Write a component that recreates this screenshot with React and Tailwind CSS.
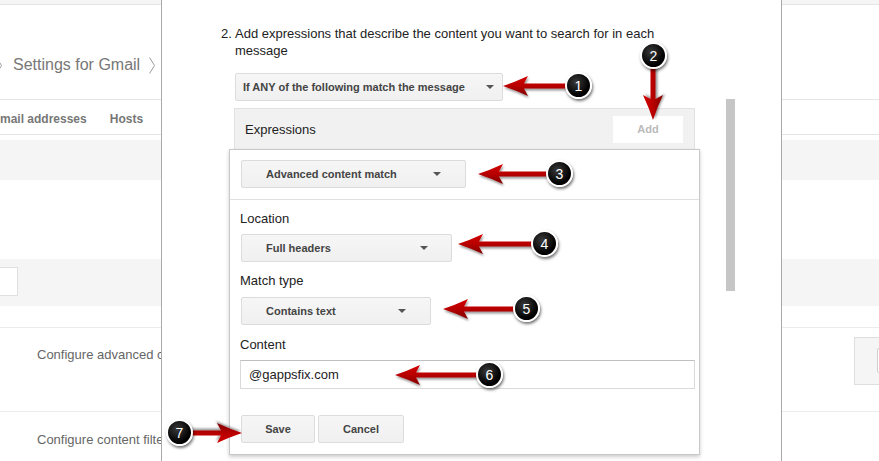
import React from 'react';

function Chevron({ className = '' }) {
  return (
    <svg width="6" height="17" viewBox="0 0 6 17" className={className}>
      <path d="M0.5 0.5 L5.5 8.5 L0.5 16.5" fill="none" stroke="#9a9a9a" strokeWidth="1" />
    </svg>
  );
}

function Caret() {
  return <span className="w-0 h-0 border-x-[4px] border-t-[4px] border-x-transparent border-t-[#555]" />;
}

function Select({ label, className = '' }) {
  return (
    <div className={`h-[28px] flex items-center justify-between rounded-[2px] border border-[#dcdcdc] bg-gradient-to-b from-[#f6f6f6] to-[#f0f0f0] text-[11px] font-bold text-[#444] ${className}`}>
      <span>{label}</span>
      <Caret />
    </div>
  );
}

function Button({ label, className = '' }) {
  return (
    <div className={`h-[28px] flex items-center justify-center rounded-[2px] border border-[#dcdcdc] bg-gradient-to-b from-[#f6f6f6] to-[#f0f0f0] text-[11px] font-bold text-[#444] ${className}`}>
      {label}
    </div>
  );
}

function LeftStrip() {
  return (
    <div className="w-[161px] shrink-0 overflow-hidden">
      <div className="h-[4px] bg-[#f5f5f5]" />
      <div className="h-[96px] border-y border-[#e5e5e5] pt-[50px]">
        <div className="flex items-center h-[20px] whitespace-nowrap">
          <Chevron className="-ml-[4px] shrink-0" />
          <span className="ml-[11px] text-[16px] leading-[20px] text-[#777]">Settings for Gmail</span>
          <Chevron className="ml-[9px] shrink-0" />
        </div>
      </div>
      <div className="h-[35px] border-b border-[#e5e5e5] pt-[4px] flex items-center whitespace-nowrap text-[12px] font-bold text-[#777]">
        <span>mail addresses</span>
        <span className="ml-[23px]">Hosts</span>
      </div>
      <div className="h-[5px]" />
      <div className="h-[40px] bg-[#f5f5f5]" />
      <div className="h-[79px]" />
      <div className="h-[47px] bg-[#f5f5f5] pt-[8px]">
        <div className="-ml-[2px] w-[20px] h-[29px] bg-white border border-[#e0e0e0]" />
      </div>
      <div className="h-[21px]" />
      <div className="h-[84px] border-t border-[#ececec] pt-[18px] pl-[37px] whitespace-nowrap text-[13px] leading-[17px] text-[#666]">
        Configure advanced content filters
      </div>
      <div className="h-[60px] border-t border-[#ececec] pt-[19px] pl-[37px] whitespace-nowrap text-[13px] leading-[17px] text-[#666]">
        Configure content filters
      </div>
    </div>
  );
}

function RightStrip() {
  return (
    <div className="flex-1 overflow-hidden">
      <div className="h-[4px] bg-[#f5f5f5]" />
      <div className="h-[96px] border-y border-[#e5e5e5]" />
      <div className="h-[35px] border-b border-[#e5e5e5]" />
      <div className="h-[5px]" />
      <div className="h-[40px] bg-[#f5f5f5]" />
      <div className="h-[79px]" />
      <div className="h-[47px] bg-[#f5f5f5]" />
      <div className="h-[21px]" />
      <div className="h-[84px] border-t border-[#ececec] pt-[9px] pl-[72px]">
        <div className="w-[60px] h-[48px] bg-[#f5f5f5] border border-[#dedede] pt-[10px] pl-[22px]">
          <div className="w-[40px] h-[25px] bg-white border border-[#cfcfcf] rounded-l-[2px]" />
        </div>
      </div>
      <div className="h-[60px] border-t border-[#ececec]" />
    </div>
  );
}

function Dialog() {
  return (
    <div className="relative w-[621px] shrink-0 h-full bg-white border-x border-[#a9a9a9] pl-[59px] pt-[25px] text-[#222]">
      <div className="flex text-[13px] leading-[17px]">
        <span className="w-[14px] shrink-0">2.</span>
        <p className="w-[460px]">Add expressions that describe the content you want to search for in each message</p>
      </div>
      <div className="ml-[14px] mt-[14px]">
        <Select label="If ANY of the following match the message" className="w-[268px] pl-[7px] pr-[8px]" />
        <div className="mt-[7px] -ml-[1px] w-[461px] h-[43px] bg-[#f1f1f1] border border-[#e2e2e2] flex items-center justify-between pl-[10px] pr-[11px]">
          <span className="text-[13px]">Expressions</span>
          <div className="w-[70px] h-[27px] bg-white flex items-center justify-center text-[11px] font-bold text-[#bababa]">Add</div>
        </div>
      </div>

      <div className="absolute left-[564px] top-[99px] w-[9px] h-[192px] bg-[#c6c6c6]" />

      <div className="absolute left-[67px] top-[149px] w-[471px] bg-white border border-[#c8c8c8] shadow-[0_2px_4px_rgba(0,0,0,0.2)]">
        <div className="px-[10px] pt-[10px] pb-[11px] border-b border-[#e0e0e0]">
          <Select label="Advanced content match" className="ml-[1px] w-[225px] pl-[24px] pr-[24px]" />
        </div>
        <div className="px-[10px] pt-[10px] pb-[11px] text-[13px] leading-[17px]">
          <div>Location</div>
          <Select label="Full headers" className="mt-[7px] ml-[1px] w-[211px] pl-[24px] pr-[23px]" />
          <div className="mt-[10px]">Match type</div>
          <Select label="Contains text" className="mt-[8px] ml-[1px] w-[190px] pl-[24px] pr-[24px]" />
          <div className="mt-[11px]">Content</div>
          <div className="mt-[7px] w-[455px] h-[29px] border border-[#d9d9d9] border-t-[#c0c0c0] flex items-center pl-[8px]">@gappsfix.com</div>
          <div className="mt-[26px] ml-[1px] flex gap-[3px]">
            <Button label="Save" className="w-[74px]" />
            <Button label="Cancel" className="w-[86px]" />
          </div>
        </div>
      </div>
    </div>
  );
}

const arrows = [
  { x: 503, y: 86, len: 70, rot: 0 },
  { x: 653, y: 120, len: 60, rot: -90 },
  { x: 478, y: 174, len: 75, rot: 0 },
  { x: 458, y: 244, len: 80, rot: 0 },
  { x: 443, y: 309, len: 78, rot: 0 },
  { x: 395, y: 375, len: 90, rot: 0 },
  { x: 242, y: 433, len: 57, rot: 180 },
];

function Callouts() {
  const circle = 'absolute w-[27px] h-[27px] rounded-full border-2 border-white bg-[radial-gradient(circle_at_40%_35%,#3a3a3a,#000_65%)] shadow-[1px_2px_3px_rgba(0,0,0,0.55)] flex items-center justify-center text-white text-[14px] leading-none';
  return (
    <div className="absolute inset-0 pointer-events-none">
      <svg width="879" height="461" className="absolute left-0 top-0">
        <defs>
          <linearGradient id="red" x1="0" y1="0" x2="0" y2="1">
            <stop offset="0" stopColor="#d20000" />
            <stop offset="0.5" stopColor="#b80000" />
            <stop offset="1" stopColor="#7e0000" />
          </linearGradient>
          <filter id="shadow" x="-20%" y="-50%" width="140%" height="200%">
            <feDropShadow dx="1" dy="2" stdDeviation="1.2" floodColor="#000" floodOpacity="0.4" />
          </filter>
        </defs>
        {arrows.map((a, i) => (
          <path
            key={i}
            transform={`translate(${a.x} ${a.y}) rotate(${a.rot})`}
            d={`M0 0 Q12 -4 25 -10 L21 -2.5 L${a.len} -2.5 L${a.len} 2.5 L21 2.5 L25 10 Q12 4 0 0 Z`}
            fill="url(#red)"
            filter="url(#shadow)"
          />
        ))}
      </svg>
      <div className={`${circle} left-[565px] top-[72px]`}>1</div>
      <div className={`${circle} left-[640px] top-[42px]`}>2</div>
      <div className={`${circle} left-[546px] top-[160px]`}>3</div>
      <div className={`${circle} left-[531px] top-[230px]`}>4</div>
      <div className={`${circle} left-[513px] top-[295px]`}>5</div>
      <div className={`${circle} left-[476px] top-[361px]`}>6</div>
      <div className={`${circle} left-[166px] top-[419px]`}>7</div>
    </div>
  );
}

export default function App() {
  return (
    <div className="relative w-[879px] h-[461px] overflow-hidden bg-white flex font-['Liberation_Sans',Arial,sans-serif]">
      <LeftStrip />
      <Dialog />
      <RightStrip />
      <Callouts />
    </div>
  );
}
